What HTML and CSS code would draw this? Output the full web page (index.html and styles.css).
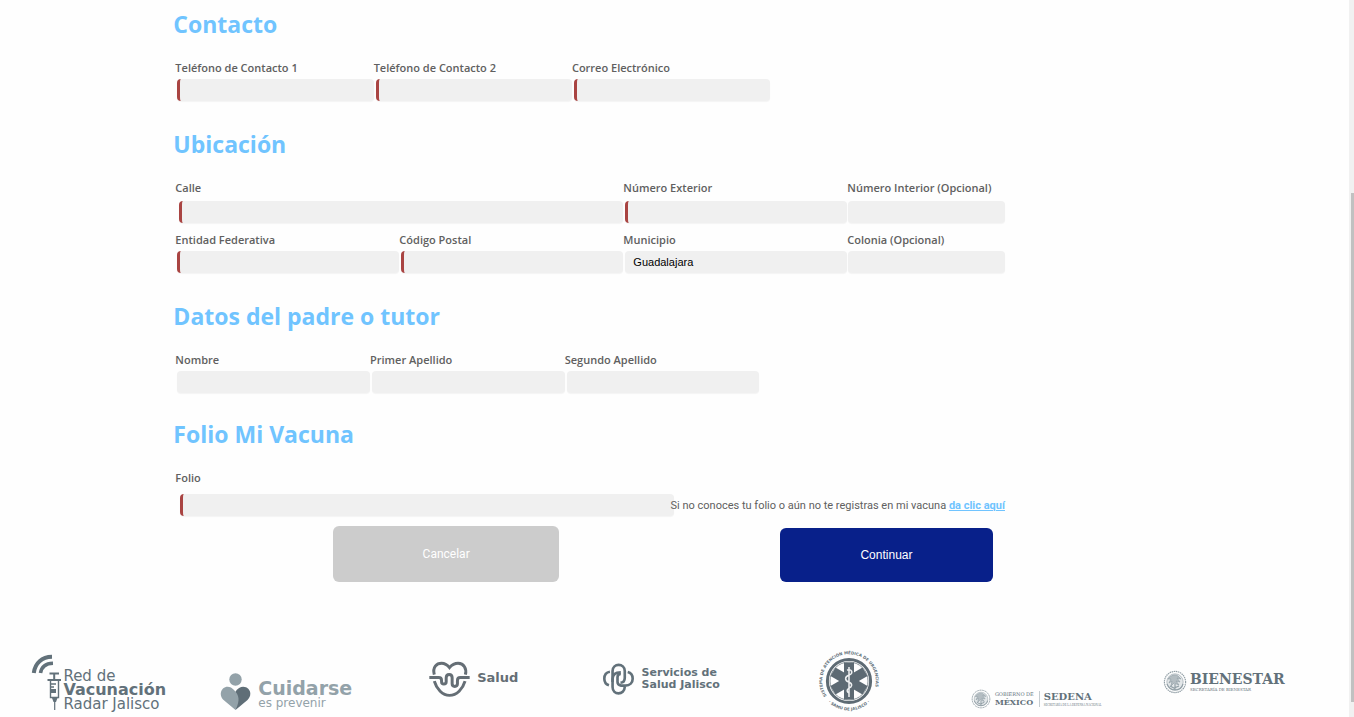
FILE: index.html
```html
<!DOCTYPE html>
<html lang="es">
<head>
<meta charset="utf-8">
<title>Registro de vacunación</title>
<link rel="stylesheet" href="styles.css">
</head>
<body>
<div class="page">
  <div class="content">
    <form class="form">
      <section class="section">
        <h2 class="title">Contacto</h2>
        <div class="row row-contact">
          <div class="field"><label for="tel1">Teléfono de Contacto 1</label><input class="required" id="tel1" type="tel"></div>
          <div class="field"><label for="tel2">Teléfono de Contacto 2</label><input class="required" id="tel2" type="tel"></div>
          <div class="field"><label for="mail">Correo Electrónico</label><input class="required" id="mail" type="email"></div>
        </div>
      </section>
      <section class="section">
        <h2 class="title">Ubicación</h2>
        <div class="row row-address spaced">
          <div class="field wide"><label for="calle">Calle</label><input class="required" id="calle" type="text"></div>
          <div class="field"><label for="ext">Número Exterior</label><input class="required" id="ext" type="text"></div>
          <div class="field last"><label for="int">Número Interior (Opcional)</label><input id="int" type="text"></div>
        </div>
        <div class="row row-address">
          <div class="field"><label for="entidad">Entidad Federativa</label><input class="required" id="entidad" type="text"></div>
          <div class="field"><label for="cp">Código Postal</label><input class="required" id="cp" type="text"></div>
          <div class="field"><label for="municipio">Municipio</label><input id="municipio" type="text" value="Guadalajara"></div>
          <div class="field last"><label for="colonia">Colonia (Opcional)</label><input id="colonia" type="text"></div>
        </div>
      </section>
      <section class="section tight">
        <h2 class="title">Datos del padre o tutor</h2>
        <div class="row row-parent">
          <div class="field"><label for="nombre">Nombre</label><input id="nombre" type="text"></div>
          <div class="field"><label for="ap1">Primer Apellido</label><input id="ap1" type="text"></div>
          <div class="field"><label for="ap2">Segundo Apellido</label><input id="ap2" type="text"></div>
        </div>
      </section>
      <section class="section">
        <h2 class="title">Folio Mi Vacuna</h2>
        <div class="folio">
          <label for="folio">Folio</label>
          <div class="folio-line">
            <input class="required" id="folio" type="text">
            <p class="hint">Si no conoces tu folio o aún no te registras en mi vacuna <a href="#">da clic aquí</a></p>
          </div>
        </div>
      </section>
      <div class="actions">
        <button class="btn cancel" type="button">Cancelar</button>
        <button class="btn continue" type="submit">Continuar</button>
      </div>
    </form>

    <footer class="logos">
      <div class="logo red">
        <svg width="32" height="57" viewBox="0 0 32 57" fill="none" stroke="#62717a">
          <path d="M2.8 19C4 9 11 3 21 2.8" stroke-width="4"/>
          <path d="M9.5 19C10.5 13 15 9.5 22 9.3" stroke-width="3.6"/>
          <path d="M18.5 19.5H28M23.200 19.500V25M16.500 26H30" stroke-width="2"/>
          <path d="M19.500 26V43.500H27.500V26M19.500 30H25M19.500 33H23" stroke-width="1.400"/>
          <path d="M20 35H25V39H20ZM21 44H26.500L25 48H22.500Z" fill="#62717a" stroke="none"/>
          <path d="M23.700 47V56" stroke-width="1.200"/>
        </svg>
        <div class="red-text"><span>Red de</span><strong>Vacunación</strong><span>Radar Jalisco</span></div>
      </div>
      <div class="logo cuidarse">
        <svg width="31" height="37" viewBox="0 0 31 37">
          <circle cx="15.500" cy="6.500" r="6.200" fill="#93a2a9"/>
          <path d="M15.500 18.500C19 13 25 12.500 28.500 16C31.500 19.500 30.500 24 27.500 27L15.500 37Z" fill="#5f6e77"/>
          <path d="M15.500 37L3 26.500C0 23 0 18.500 3 15.500C6.500 12.500 11 13.500 14 17C19 22 20.500 27 15.500 37Z" fill="#93a2a9"/>
        </svg>
        <div class="cuidarse-text"><strong>Cuidarse</strong><span>es prevenir</span></div>
      </div>
      <div class="logo salud">
        <svg width="41" height="37" viewBox="42 48 124 110" fill="none" stroke="#656e75" stroke-width="9">
          <path d="M58 88C52 66 65 54 80 54C92 54 99 61 104 67C110 60 118 54 130 54C147 54 157 70 152 88"/>
          <path d="M43 97H71Q80 97 80 106V110Q80 117 87 117Q94 117 94 110V98Q94 88 103 88Q112 88 112 98V116Q112 124 120 124Q128 124 128 116V106Q128 97 137 97H165"/>
          <path d="M58 108C65 132 83 151 104 151C126 151 144 132 151 108"/>
        </svg>
        <strong>Salud</strong>
      </div>
      <div class="logo servicios">
        <svg width="31" height="32" viewBox="31 55 94 96" fill="none" stroke="#62717a" stroke-width="8">
          <path d="M52 81C39 83 35 94 35 102C35 111 40 119 49 122"/>
          <path d="M106 82C117 85 121 94 121 102C121 114 113 123 98 123H86Q75 121 75 112"/>
          <path d="M60 112V79C60 54 97 54 97 79V99C97 110 91 114 84 114"/>
          <path d="M85 83C73 83 60 87 60 103V127C60 153 96 153 97 127"/>
          <path d="M75 112V98Q75 88 85 88"/>
        </svg>
        <div class="servicios-text"><strong>Servicios de</strong><strong>Salud Jalisco</strong></div>
      </div>
      <div class="logo samu">
        <svg width="62" height="62" viewBox="-31 -31 62 62">
          <defs>
            <path id="ring-top" d="M-22.300 14.900A26.800 26.800 0 1 1 24.800 10"/>
            <path id="ring-bottom" d="M-22.500 19A29.400 29.400 0 0 0 22.500 19"/>
          </defs>
          <circle r="21.600" fill="#fefefe" stroke="#5d6a73" stroke-width="3"/>
          <circle r="19" fill="none" stroke="#8b959b" stroke-width="1"/>
          <g fill="#5d6a73">
            <rect x="-5" y="-18.500" width="10" height="37"/>
            <rect x="-5" y="-18.500" width="10" height="37" transform="rotate(60)"/>
            <rect x="-5" y="-18.500" width="10" height="37" transform="rotate(-60)"/>
          </g>
          <path d="M0-14V16M-2-11C4-12 4-7 0-6C-5-4-4 0 0 1C4 3 3 6 0 7C-3 9-2 11 0 12" fill="none" stroke="#eef0f1" stroke-width="1.500"/>
          <g class="samu-text">
            <text><textPath href="#ring-top">SISTEMA DE ATENCIÓN MÉDICA DE URGENCIAS</textPath></text>
            <text text-anchor="middle"><textPath href="#ring-bottom" startOffset="50%">· SAMU DE JALISCO ·</textPath></text>
          </g>
        </svg>
      </div>
      <div class="logo sedena">
        <svg class="seal" width="20" height="20" viewBox="0 0 24 24"><use href="#seal"/></svg>
        <div class="mexico-text"><span>GOBIERNO DE</span><strong>MÉXICO</strong></div>
        <div class="sedena-text"><strong>SEDENA</strong><span>SECRETARÍA DE LA DEFENSA NACIONAL</span></div>
      </div>
      <div class="logo bienestar">
        <svg class="seal" width="24" height="24" viewBox="0 0 24 24">
          <g id="seal" fill="none" stroke="#93a0a7">
            <circle cx="12" cy="12" r="10.600" stroke-width="1.200" stroke-dasharray="1.500 .6"/>
            <circle cx="12" cy="12" r="8.200" fill="#e3e7e9" stroke-width=".6"/>
            <path d="M5 9C8 5 12 4 15 6L18 9L14 8L17 12L13 11L16 15L11 13L8 16L9 11L6 13L8 9Z" fill="#b4bdc2" stroke-width=".7"/>
            <path d="M4 14C6 19 9 20 12 20C16 20 19 18 20 14M7 16L11 18L16 16M12 14V20" stroke-width="1.200"/>
          </g>
        </svg>
        <div class="bienestar-text"><strong>BIENESTAR</strong><span>SECRETARÍA DE BIENESTAR</span></div>
      </div>
    </footer>
  </div>
  <div class="scrollbar"><div class="thumb"></div></div>
</div>
</body>
</html>
```
FILE: styles.css
```css
* { box-sizing: border-box; }
body {
  margin: 0;
  background: #fefefe;
  color: #606060;
  font-family: "Open Sans", "Noto Sans", sans-serif;
  font-size: 11px;
  overflow: hidden;
}
.page { display: flex; height: 100vh; }
.content { flex: 1; min-width: 0; padding-top: 8px; overflow: hidden; }
.scrollbar { width: 5px; padding-left: 2px; background: #f1f1f1; }
.thumb { height: 71%; margin-top: 193px; background: #c1c1c1; }

.form { width: 61.5%; margin-left: 13%; }
.section { margin-bottom: 27px; }
.tight { margin-bottom: 25px; }
.title {
  margin: 0 0 20px -2px;
  color: #70c4ff;
  font-size: 23px;
  font-weight: 700;
  line-height: 32px;
}
.row { display: grid; }
.row-contact { grid-template-columns: repeat(3, 1fr); width: 71.7%; }
.row-address { grid-template-columns: repeat(3, 27fr) 19fr; }
.row-parent { grid-template-columns: repeat(3, 1fr); width: 70.4%; }
.spaced { margin-bottom: 9px; }
.spaced .field { gap: 5px; }
.wide { grid-column: span 2; }
.wide input { margin-left: 4px; }
.field { display: flex; flex-direction: column; gap: 3px; min-width: 0; }
label { font-weight: 600; line-height: 16px; white-space: nowrap; }
input {
  height: 22px;
  min-width: 0;
  margin: 0 0 0 2px;
  padding: 0 8px;
  border: 0;
  border-radius: 4px;
  background: #f0f0f0;
  box-shadow: 0 1px 1px #f4f4f4;
  color: #000;
  font: 11px "Liberation Sans", Arial, sans-serif;
}
.last input { margin-left: 1px; }
.required { border-left: 3px solid #a94442; }
.folio { display: flex; flex-direction: column; gap: 8px; }
.folio-line { display: flex; align-items: center; }
.folio-line input { flex: 1; margin-left: 5px; margin-right: -3px; }
.hint { position: relative; margin: 0; padding-top: 2px; font-family: Roboto, sans-serif; line-height: 16px; white-space: nowrap; }
.hint a { color: #70c4ff; font-weight: 700; }
.actions { display: flex; justify-content: space-between; align-items: flex-end; margin: -17px 12px 0 158px; }
.btn { border: 0; border-radius: 6px; color: #fff; }
.cancel { width: 34.2%; height: 56px; background: #ccc; font: 12px Roboto, sans-serif; }
.continue { width: 32.3%; height: 54px; background: #08208a; font: 12px "Liberation Sans", Arial, sans-serif; }

.logos {
  display: grid;
  grid-template-columns: repeat(7, 1fr);
  justify-items: center;
  align-items: start;
  width: 97.3%;
  margin: 68px 0 0 5px;
  color: #62717a;
  font-family: "DejaVu Sans", sans-serif;
  white-space: nowrap;
}
.logo { display: flex; align-items: center; }
.logo svg { flex: none; }
.logo span, .logo strong { display: block; }
.red { margin-top: 3px; }
.red-text { padding-top: 16px; font-size: 15px; line-height: 14px; }
.red-text strong { font-size: 16px; }
.cuidarse { gap: 7px; margin-top: 23px; color: #93a2a9; }
.cuidarse-text { padding-top: 5px; }
.cuidarse-text strong { font-size: 19px; line-height: 18px; }
.cuidarse-text span { font-size: 12px; line-height: 12px; }
.salud { gap: 7px; margin-top: 11px; color: #656e75; font-size: 13px; }
.salud strong { padding-bottom: 4px; }
.servicios { gap: 8px; margin-top: 13px; font-size: 11px; line-height: 12px; }
.samu-text { font-size: 4px; font-weight: 700; fill: #62717a; }
.sedena { gap: 4px; margin-top: 39px; font-family: "DejaVu Serif", serif; }
.mexico-text { padding-right: 5px; border-right: 1px solid #c5ccd0; }
.mexico-text span { font-size: 5px; line-height: 6px; }
.mexico-text strong { font-size: 8px; line-height: 10px; }
.sedena-text strong { font-size: 10px; line-height: 12px; }
.sedena-text span { font: 3px/4px "Liberation Serif", serif; }
.bienestar { gap: 3px; margin-top: 20px; font-family: "DejaVu Serif", serif; }
.bienestar-text strong { font-size: 14px; line-height: 16px; }
.bienestar-text span { font: 4px/6px "DejaVu Serif", serif; }
```
